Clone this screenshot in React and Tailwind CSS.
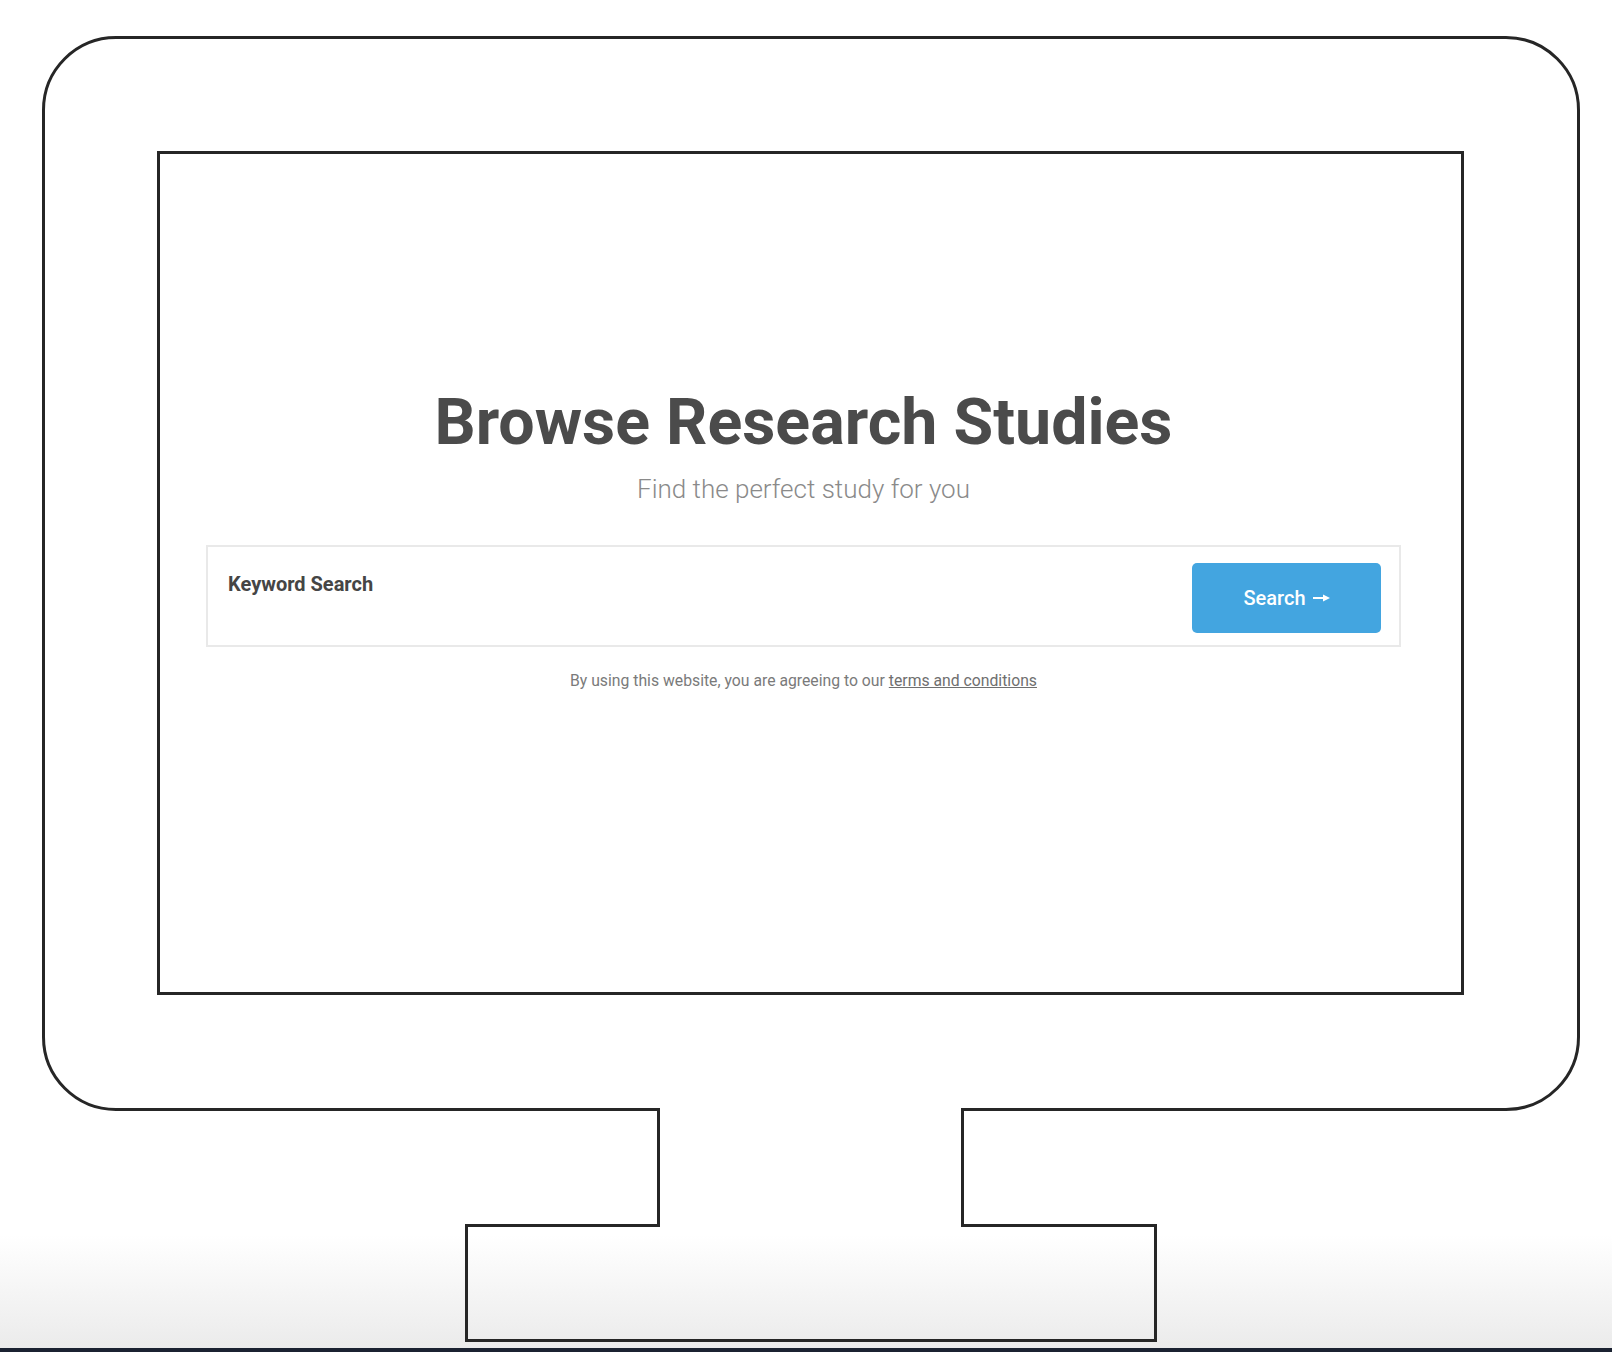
import React from 'react';

// Small arrow used inside the search button
const ArrowGlyph = () => (
  <svg width="17" height="10" viewBox="0 0 17 10" className="ml-[7px] mt-[1px]">
    <line x1="0" y1="5" x2="11" y2="5" stroke="white" strokeWidth="2" />
    <polygon points="10,1.5 17,5 10,8.5" fill="white" />
  </svg>
);

const App = () => {
  return (
    <div className="w-[1612px] h-[1352px] overflow-hidden font-[Roboto,sans-serif] bg-[linear-gradient(to_bottom,#ffffff_0px,#ffffff_1235px,#ebebeb_1348px,#1b2231_1348px)]">
      <div className="flex flex-col pt-[36px] pl-[42px]">
        {/* monitor body */}
        <div className="w-[1538px] h-[1075px] border-[3px] border-[#262626] rounded-[74px] p-[112px]">
          {/* screen */}
          <div className="w-[1307px] h-[844px] border-[3px] border-[#262626] bg-white">
            <div className="ml-[46px] w-[1195px] pt-[236px] flex flex-col items-center">
              <h1 className="text-[64.5px] leading-none font-bold text-[#4b4b4b]">
                Browse Research Studies
              </h1>
              <p className="mt-[21px] text-[26px] leading-none font-light text-[#8a8a8a]">
                Find the perfect study for you
              </p>

              <div className="mt-[43px] w-full h-[102px] border-2 border-[#e9e9e9] flex justify-between">
                <div className="pt-[27px] pl-[20px] text-[20px] leading-none font-bold text-[#454545]">
                  Keyword Search
                </div>
                <div className="pt-[16px] pr-[18px]">
                  <button
                    type="button"
                    className="w-[189px] h-[70px] rounded-[5px] bg-[#43a5e0] text-white text-[20px] font-medium flex items-center justify-center"
                  >
                    Search
                    <ArrowGlyph />
                  </button>
                </div>
              </div>

              <p className="mt-[26px] text-[15.75px] leading-none text-[#7a7a7a]">
                By using this website, you are agreeing to our{' '}
                <a href="#" className="underline text-[#6f6f6f]">terms and conditions</a>
              </p>
            </div>
          </div>
        </div>

        {/* neck */}
        <div className="relative z-10 -mt-[3px] ml-[615px] w-[307px] h-[119px] border-x-[3px] border-[#262626] bg-white" />

        {/* base */}
        <div className="-mt-[3px] ml-[423px] w-[692px] h-[118px] border-[3px] border-[#262626]" />
      </div>
    </div>
  );
};

export default App;
